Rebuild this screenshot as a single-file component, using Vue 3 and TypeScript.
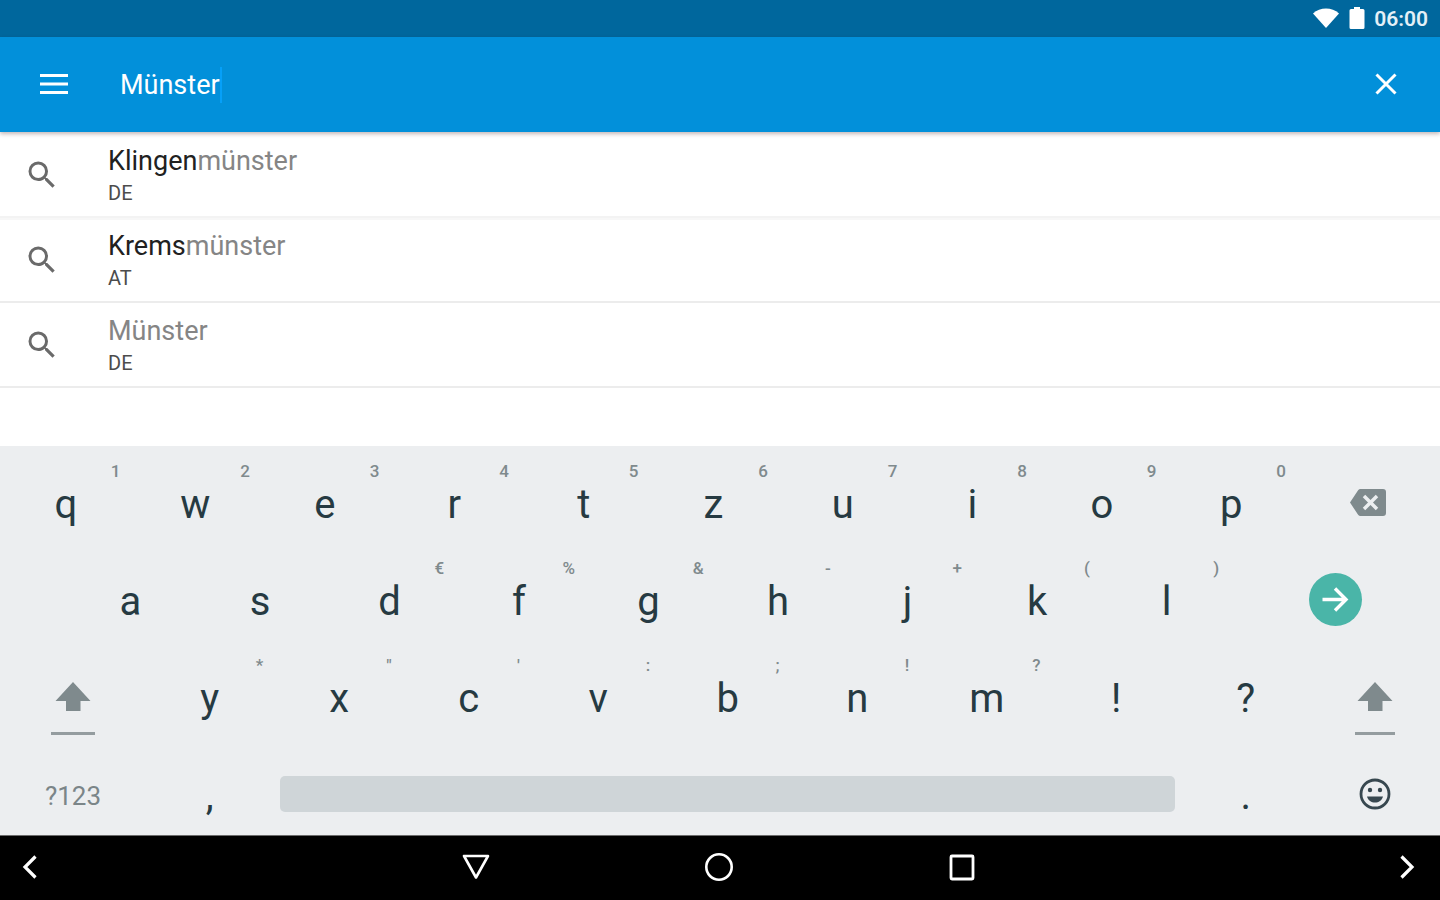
<script setup lang="ts">
import { ref } from 'vue'

interface Suggestion {
  rest: string
  match: string
  country: string
}

interface Key {
  label: string
  hint?: string
}

const query = ref('Münster')

const suggestions: Suggestion[] = [
  { rest: 'Klingen', match: 'münster', country: 'DE' },
  { rest: 'Krems', match: 'münster', country: 'AT' },
  { rest: '', match: 'Münster', country: 'DE' },
]

function keys(labels: string, hints: string[]): Key[] {
  return labels.split('').map((label, i) => ({ label, hint: hints[i] }))
}

const topKeys = keys('qwertzuiop', ['1', '2', '3', '4', '5', '6', '7', '8', '9', '0'])
const homeKeys = keys('asdfghjkl', ['', '', '€', '%', '&', '-', '+', '(', ')'])
const bottomKeys = keys('yxcvbnm!?', ['*', '"', "'", ':', ';', '!', '?'])
</script>

<template>
  <div class="screen">
    <div class="status">
      <svg width="26" height="20" viewBox="0 0 26 20" aria-hidden="true">
        <path d="M0 5.5C7-1.2 19-1.2 26 5.5L13 20z" fill="#fff" />
      </svg>
      <svg class="battery" width="16" height="22" viewBox="0 0 16 22" aria-hidden="true">
        <path d="M5 0h6v2h3a1.5 1.5 0 0 1 1.500 1.500v17a1.500 1.500 0 0 1-1.500 1.500H2a1.500 1.500 0 0 1-1.500-1.500v-17A1.500 1.500 0 0 1 2 2h3z" fill="#fff" />
      </svg>
      <span class="clock">06:00</span>
    </div>

    <header class="appbar">
      <button class="icon-btn" type="button" aria-label="Menu">
        <svg width="30" height="22" viewBox="0 0 30 22">
          <path d="M1 2.500h28M1 11h28M1 19.500h28" stroke="#fff" stroke-width="3" />
        </svg>
      </button>
      <div class="field">
        <input v-model="query" class="query" type="text" aria-label="Search city" />
        <span class="caret"></span>
      </div>
      <button class="icon-btn" type="button" aria-label="Clear" @click="query = ''">
        <svg width="24" height="24" viewBox="0 0 24 24">
          <path d="M2.500 2.500l19 19M21.500 2.500l-19 19" stroke="#fff" stroke-width="3" />
        </svg>
      </button>
    </header>

    <main class="results">
      <button v-for="(s, i) in suggestions" :key="i" class="result" type="button">
        <svg width="36" height="36" viewBox="0 0 24 24" aria-hidden="true">
          <path
            d="M15.500 14h-.79l-.28-.27A6.471 6.471 0 0 0 16 9.500 6.500 6.500 0 1 0 9.500 16c1.610 0 3.090-.59 4.230-1.570l.27.28v.79l5 4.990L20.490 19l-4.990-5zm-6 0C7.010 14 5 11.990 5 9.500S7.010 5 9.500 5 14 7.010 14 9.500 11.990 14 9.500 14z"
            fill="#6a6a6a"
          />
        </svg>
        <span class="texts">
          <span class="name">{{ s.rest }}<span class="match">{{ s.match }}</span></span>
          <span class="country">{{ s.country }}</span>
        </span>
      </button>
    </main>

    <section class="keyboard" aria-label="Keyboard">
      <div class="row row-top">
        <button v-for="k in topKeys" :key="k.label" class="key letter" type="button">
          {{ k.label }}<span class="hint">{{ k.hint }}</span>
        </button>
        <button class="key" type="button" aria-label="Backspace">
          <svg width="38" height="30" viewBox="0 0 38 30">
            <path d="M11.500 1H34a3 3 0 0 1 3 3v21a3 3 0 0 1-3 3H11.500a3 3 0 0 1-2.400-1.200L1 14.500l8.100-12.300A3 3 0 0 1 11.500 1z" fill="#7f8a8d" />
            <path d="M15 8l13 13M28 8l-13 13" stroke="#eceef0" stroke-width="3.500" />
          </svg>
        </button>
      </div>

      <div class="row row-home">
        <span></span>
        <button v-for="k in homeKeys" :key="k.label" class="key letter" type="button">
          {{ k.label }}<span v-if="k.hint" class="hint">{{ k.hint }}</span>
        </button>
        <button class="key" type="button" aria-label="Next">
          <svg width="54" height="54" viewBox="0 0 54 54">
            <circle cx="26.500" cy="26.500" r="26.500" fill="#4ab5a8" />
            <path d="M13.500 26.500h23M26 15.500L37 26.500l-11 11" fill="none" stroke="#fff" stroke-width="3.400" />
          </svg>
        </button>
      </div>

      <div class="row row-bottom">
        <button class="key" type="button" aria-label="Shift">
          <svg width="44" height="78" viewBox="0 0 44 78">
            <path d="M22 24L39.500 43H29.500v10H15V43H4.500z" fill="#7f8a8d" />
            <path d="M0 75.500h44" stroke="#949c9f" stroke-width="3" />
          </svg>
        </button>
        <button v-for="k in bottomKeys" :key="k.label" class="key letter" type="button">
          {{ k.label }}<span v-if="k.hint" class="hint">{{ k.hint }}</span>
        </button>
        <button class="key" type="button" aria-label="Shift right">
          <svg width="40" height="78" viewBox="0 0 40 78">
            <path d="M20 24L37.500 43H27.500v10H13V43H2.500z" fill="#7f8a8d" />
            <path d="M0 75.500h40" stroke="#949c9f" stroke-width="3" />
          </svg>
        </button>
      </div>

      <div class="row row-space">
        <button class="key letter symbols" type="button">?123</button>
        <button class="key letter" type="button">,</button>
        <button class="key" type="button" aria-label="Space"><span class="bar"></span></button>
        <button class="key letter" type="button">.</button>
        <button class="key" type="button" aria-label="Emoji">
          <svg width="32" height="32" viewBox="0 0 32 32">
            <circle cx="16" cy="16" r="14" fill="none" stroke="#37474f" stroke-width="2.800" />
            <circle cx="11" cy="12" r="2.200" fill="#37474f" />
            <circle cx="21" cy="12" r="2.200" fill="#37474f" />
            <path d="M8 18.500h16c-1.200 4-4.300 6-8 6s-6.800-2-8-6z" fill="#37474f" />
          </svg>
        </button>
      </div>
    </section>

    <nav class="navbar">
      <button class="nav-btn" type="button" aria-label="Previous">
        <svg width="16" height="24" viewBox="0 0 16 24">
          <path d="M13.500 1.500L3 12l10.500 10.500" fill="none" stroke="#fff" stroke-width="3.200" />
        </svg>
      </button>
      <div class="nav-main">
        <button class="nav-btn" type="button" aria-label="Back">
          <svg width="30" height="30" viewBox="0 0 30 30">
            <path d="M3 4h24L15 25.500z" fill="none" stroke="#fff" stroke-width="2.600" stroke-linejoin="round" />
          </svg>
        </button>
        <button class="nav-btn" type="button" aria-label="Home">
          <svg width="30" height="30" viewBox="0 0 30 30">
            <circle cx="15" cy="15" r="12.700" fill="none" stroke="#fff" stroke-width="2.600" />
          </svg>
        </button>
        <button class="nav-btn" type="button" aria-label="Recents">
          <svg width="30" height="30" viewBox="0 0 30 30">
            <rect x="4" y="4" width="22" height="23" rx="1" fill="none" stroke="#fff" stroke-width="2.800" />
          </svg>
        </button>
      </div>
      <button class="nav-btn" type="button" aria-label="Forward">
        <svg width="16" height="24" viewBox="0 0 16 24">
          <path d="M2.500 1.500L13 12 2.500 22.500" fill="none" stroke="#fff" stroke-width="3.200" />
        </svg>
      </button>
    </nav>
  </div>
</template>

<style>
body {
  margin: 0;
  background: #fff;
}
</style>

<style scoped>
.screen {
  min-height: 100vh;
  display: flex;
  flex-direction: column;
  background: #fff;
  font-family: Roboto, 'Liberation Sans', sans-serif;
}

button {
  margin: 0;
  padding: 0;
  border: 0;
  background: none;
  font-family: inherit;
  color: inherit;
  cursor: pointer;
}

svg {
  display: block;
  flex: none;
}

.status {
  height: 36px;
  padding: 0 12px 1px 0;
  display: flex;
  align-items: center;
  justify-content: flex-end;
  background: #00679d;
  color: #e4f0f7;
}

.battery {
  margin: 0 9px 0 10px;
}

.clock {
  font-size: 21px;
  font-weight: 600;
  line-height: 24px;
  padding-top: 2px;
}

.appbar {
  position: relative;
  height: 93px;
  padding: 0 30px 2px;
  display: flex;
  align-items: center;
  background: #0290da;
  box-shadow: 0 2px 4px rgba(60, 20, 20, 0.3);
}

.icon-btn {
  width: 48px;
  height: 48px;
  display: flex;
  align-items: center;
  justify-content: center;
}

.field {
  flex: 1;
  padding: 2px 0 0 42px;
  display: flex;
  align-items: center;
}

.query {
  field-sizing: content;
  padding: 0;
  border: 0;
  outline: 0;
  background: none;
  font-family: inherit;
  font-size: 27px;
  line-height: 32px;
  color: #fff;
}

.caret {
  width: 2px;
  height: 36px;
  background: #06a0f8;
}

.results {
  flex: 1;
  padding-top: 1px;
}

.result {
  width: 100%;
  min-height: 85px;
  padding: 0 24px;
  display: flex;
  align-items: center;
  gap: 48px;
  border-bottom: 2px solid #ececec;
  text-align: left;
}

.result:first-child {
  border-bottom-color: #f3f3f3;
  box-shadow: 0 2px 0 #f7f7f7;
}

.texts {
  display: flex;
  flex-direction: column;
  padding-top: 5px;
}

.name {
  font-size: 27px;
  line-height: 31px;
  color: #212121;
}

.match {
  color: #858585;
}

.country {
  font-size: 20px;
  line-height: 32px;
  color: #4c4c4c;
}

.keyboard {
  background: #eceef0;
  padding: 0 0 1px 1px;
  color: #263a42;
}

.row {
  display: grid;
  min-height: 97px;
}

.row-top {
  grid-template-columns: repeat(10, 9fr) 10fr;
}

.row-home {
  grid-template-columns: 9fr repeat(9, 18fr) 29fr;
}

.row-bottom {
  grid-template-columns: 10fr repeat(10, 9fr);
}

.row-space {
  grid-template-columns: 10fr 9fr 63fr 9fr 9fr;
}

.key {
  position: relative;
  min-width: 0;
  height: 97px;
  padding-top: 17px;
  display: flex;
  align-items: center;
  justify-content: center;
  font-size: 40px;
  line-height: 48px;
}

.letter {
  padding-top: 20px;
}

.hint {
  position: absolute;
  top: 15px;
  right: 5px;
  width: 20px;
  font-size: 17px;
  font-weight: 500;
  line-height: 20px;
  text-align: center;
  color: #7f8a8d;
}

.symbols {
  font-size: 26px;
  color: #7b8588;
}

.bar {
  width: 100%;
  height: 36px;
  margin: 0 6px;
  border-radius: 5px;
  background: #cfd5d8;
}

.navbar {
  height: 62px;
  padding: 0 8px 2px 5px;
  display: flex;
  align-items: center;
  justify-content: space-between;
  border-top: 1px solid #6b6b6b;
  background: #000;
}

.nav-main {
  display: flex;
  gap: 193px;
}

.nav-btn {
  width: 50px;
  height: 50px;
  display: flex;
  align-items: center;
  justify-content: center;
}
</style>
